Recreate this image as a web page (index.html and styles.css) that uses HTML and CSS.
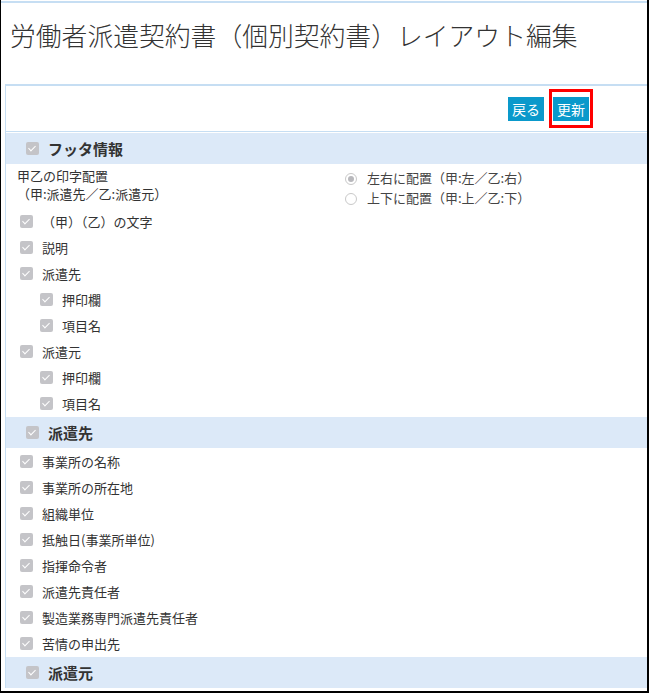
FILE: index.html
```html
<!DOCTYPE html>
<html lang="ja">
<head>
    <meta charset="UTF-8">
    <title>レイアウト編集</title>
    <link rel="stylesheet" href="styles.css">
</head>
<body>
    <div class="page">
        <div class="title-area">
            <h1>労働者派遣契約書（個別契約書）レイアウト編集</h1>
        </div>

        <div class="panel">
            <div class="toolbar">
                <button class="btn">戻る</button>
                <span class="mark"><button class="btn">更新</button></span>
            </div>

            <div class="section-head"><span class="cb"></span>フッタ情報</div>
            <div class="option-row">
                <div class="option-label">甲乙の印字配置<br>（甲:派遣先／乙:派遣元）</div>
                <div class="option-radios">
                    <div class="radio-line"><span class="radio checked"></span>左右に配置（甲:左／乙:右）</div>
                    <div class="radio-line"><span class="radio"></span>上下に配置（甲:上／乙:下）</div>
                </div>
            </div>
            <div class="item"><span class="cb"></span>（甲）（乙）の文字</div>
            <div class="item"><span class="cb"></span>説明</div>
            <div class="item"><span class="cb"></span>派遣先</div>
            <div class="item sub"><span class="cb"></span>押印欄</div>
            <div class="item sub"><span class="cb"></span>項目名</div>
            <div class="item"><span class="cb"></span>派遣元</div>
            <div class="item sub"><span class="cb"></span>押印欄</div>
            <div class="item sub"><span class="cb"></span>項目名</div>

            <div class="section-head"><span class="cb"></span>派遣先</div>
            <div class="item"><span class="cb"></span>事業所の名称</div>
            <div class="item"><span class="cb"></span>事業所の所在地</div>
            <div class="item"><span class="cb"></span>組織単位</div>
            <div class="item"><span class="cb"></span>抵触日(事業所単位)</div>
            <div class="item"><span class="cb"></span>指揮命令者</div>
            <div class="item"><span class="cb"></span>派遣先責任者</div>
            <div class="item"><span class="cb"></span>製造業務専門派遣先責任者</div>
            <div class="item"><span class="cb"></span>苦情の申出先</div>

            <div class="section-head"><span class="cb"></span>派遣元</div>
        </div>
    </div>
</body>
</html>
```

FILE: styles.css
```css
body {
    margin: 0;
    font-family: "Noto Sans CJK JP", "Noto Sans", sans-serif;
    color: #333;
    background-color: #fff;
}

.page {
    height: 693px;
    box-sizing: border-box;
    border-left: 1px solid #000;
    border-right: 2px solid #000;
    border-bottom: 2px solid #000;
    padding-top: 1px;
    overflow: hidden;
}

.title-area {
    height: 81px;
    border-top: 2px solid #c6def3;
}

h1 {
    margin: 0;
    padding: 15px 0 0 9px;
    font-size: 25.8px;
    line-height: 34px;
    font-weight: 300;
    color: #333;
}

.panel {
    margin-left: 4px;
    border-left: 1px solid #c6def3;
    border-top: 2px solid #c6def3;
}

.toolbar {
    height: 45px;
    display: flex;
    justify-content: flex-end;
    align-items: center;
    gap: 5px;
    padding-right: 54px;
    border-bottom: 1px solid #c6def3;
}

.btn {
    height: 24px;
    padding: 0 4px;
    border: none;
    background-color: #0a99cb;
    color: #fff;
    font-family: inherit;
    font-size: 14px;
    line-height: 24px;
}

.mark {
    display: flex;
    align-items: center;
    height: 39px;
    box-sizing: border-box;
    padding: 0 1px;
    border: 3px solid #f00;
}

.section-head {
    height: 31px;
    margin-top: 1px;
    display: flex;
    align-items: center;
    padding-left: 20px;
    background-color: #dce9f8;
    font-size: 15px;
    font-weight: bold;
    color: #333;
}

.section-head .cb {
    margin-right: 9px;
}

.cb {
    position: relative;
    display: inline-block;
    width: 13px;
    height: 13px;
    border-radius: 2px;
    background-color: #c4c4c8;
    flex-shrink: 0;
}

.cb::after {
    content: "";
    position: absolute;
    left: 4px;
    top: 2px;
    width: 3px;
    height: 6px;
    border: solid #fff;
    border-width: 0 1.5px 1.5px 0;
    transform: rotate(45deg);
}

.option-row {
    display: flex;
    height: 44px;
    box-sizing: border-box;
    padding: 3px 0 0 11px;
    font-size: 13px;
}

.option-label {
    width: 328px;
    line-height: 18px;
}

.option-radios {
    color: #444;
}

.radio-line {
    display: flex;
    align-items: center;
    height: 20px;
}

.radio {
    display: inline-block;
    width: 12px;
    height: 12px;
    margin-right: 10px;
    border: 1px solid #c9c9c9;
    border-radius: 50%;
    box-sizing: border-box;
    position: relative;
    top: 2px;
    background-color: #fff;
}

.radio.checked::after {
    content: "";
    position: absolute;
    left: 2px;
    top: 2px;
    width: 6px;
    height: 6px;
    border-radius: 50%;
    background-color: #b8b8bc;
}

.item {
    height: 26px;
    display: flex;
    align-items: center;
    padding-left: 14px;
    font-size: 13px;
}

.item .cb {
    margin-right: 9px;
}

.item.sub {
    padding-left: 34px;
}
```
